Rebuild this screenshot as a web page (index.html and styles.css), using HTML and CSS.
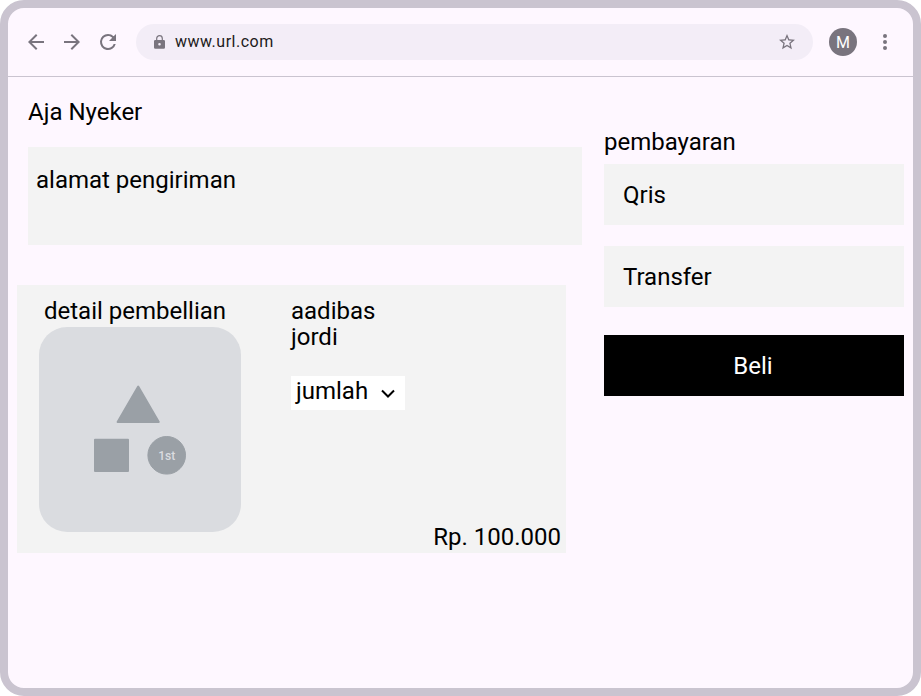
FILE: index.html
```html
<!DOCTYPE html>
<html lang="id">
<head>
<meta charset="utf-8">
<title>Aja Nyeker</title>
<link rel="stylesheet" href="styles.css">
</head>
<body>
<div class="browser">
  <header class="toolbar">
    <nav class="nav">
      <svg class="icon" viewBox="0 0 24 24"><path d="M20 11H7.83l5.59-5.59L12 4l-8 8 8 8 1.41-1.41L7.83 13H20z"/></svg>
      <svg class="icon" viewBox="0 0 24 24"><path d="M12 4l-1.41 1.41L16.17 11H4v2h12.17l-5.58 5.59L12 20l8-8z"/></svg>
      <svg class="icon" viewBox="0 0 24 24"><path d="M17.65 6.35A7.96 7.96 0 0 0 12 4a8 8 0 1 0 7.73 10h-2.08A6 6 0 1 1 12 6c1.66 0 3.14.69 4.22 1.78L13 11h7V4z"/></svg>
    </nav>
    <div class="address">
      <svg class="lock" viewBox="0 0 11 14"><path class="shackle" d="M2.700 6V3.500a2.800 2.800 0 0 1 5.600 0V6"/><path fill-rule="evenodd" d="M1.300 5h8.400A1.300 1.300 0 0 1 11 6.300v6.100a1.300 1.300 0 0 1-1.300 1.300H1.300A1.300 1.300 0 0 1 0 12.400V6.300A1.300 1.300 0 0 1 1.300 5zM5.500 8a1.300 1.300 0 1 0 0 2.600 1.300 1.300 0 0 0 0-2.600z"/></svg>
      <span class="url">www.url.com</span>
      <svg class="star" viewBox="2 2 20 19"><path d="M22 9.240l-7.190-.620L12 2 9.190 8.630 2 9.240l5.460 4.730L5.820 21 12 17.270 18.180 21l-1.630-7.030zM12 15.400l-3.760 2.270 1-4.280-3.320-2.880 4.380-.38L12 6.100l1.710 4.040 4.380.38-3.320 2.880 1 4.280z"/></svg>
    </div>
    <div class="avatar">M</div>
    <svg class="icon" viewBox="0 0 24 24"><circle cx="12" cy="6" r="2"/><circle cx="12" cy="12" r="2"/><circle cx="12" cy="18" r="2"/></svg>
  </header>
  <main class="page">
    <section class="details">
      <h1 class="title">Aja Nyeker</h1>
      <div class="shipping">alamat pengiriman</div>
      <article class="order">
        <div class="preview">
          <h2 class="caption">detail pembellian</h2>
          <div class="thumb">
            <svg class="shapes" viewBox="0 0 202 205">
              <path d="M99.200 59.500L119.800 94.900H78.600z"/>
              <path d="M56 112.700h33v31.300h-33z"/>
              <circle cx="127.700" cy="128.300" r="18.800"/>
              <text x="127.700" y="132.600">1st</text>
            </svg>
          </div>
        </div>
        <div class="product">
          <p class="name">aadibas<br>jordi</p>
          <div class="quantity">jumlah
            <svg class="chevron" viewBox="0 0 16 10"><path d="M2 1.500l6 6 6-6"/></svg>
          </div>
          <p class="price">Rp. 100.000</p>
        </div>
      </article>
    </section>
    <aside class="payment">
      <h2 class="caption">pembayaran</h2>
      <div class="method">Qris</div>
      <div class="method">Transfer</div>
      <button class="buy">Beli</button>
    </aside>
  </main>
</div>
</body>
</html>
```
FILE: styles.css
```css
* { box-sizing: border-box; }
body { margin: 0; background: #fff; font-family: Roboto, sans-serif; color: #000; }
h1, h2, p { margin: 0; font-weight: 400; font-size: inherit; }
.browser { width: 921px; height: 696px; border: 8px solid #cac4d0; border-radius: 24px; background: #fef7ff; overflow: hidden; }
.toolbar { display: flex; align-items: center; height: 69px; padding: 0 16px; border-bottom: 1px solid #cac4d0; }
.icon { width: 24px; height: 24px; fill: #79747e; flex: none; }
.nav { display: flex; gap: 12px; margin-right: 16px; }
.address { display: flex; align-items: center; width: 677px; height: 36px; padding: 0 18px; border-radius: 18px; background: #f3edf7; }
.lock { width: 11px; height: 14px; fill: #79747e; }
.shackle { fill: none; stroke: #79747e; stroke-width: 1.2; }
.url { margin-left: 10px; font-size: 16px; line-height: 24px; letter-spacing: 0.5px; color: #1d1b20; }
.star { width: 16px; height: 15.2px; margin-left: auto; fill: #79747e; }
.avatar { width: 28px; height: 28px; margin: 0 16px; border-radius: 50%; background: #79747e; color: #fff; font-size: 16px; line-height: 30px; text-align: center; }
.page { display: flex; justify-content: space-between; padding: 0 9px; font-size: 24px; line-height: 26px; }
.details { width: 565px; padding-top: 22px; }
.title { margin-left: 11px; }
.shipping { width: 554px; height: 98px; margin: 22px 0 40px 11px; padding: 20px 8px; background: #f3f3f3; }
.order { display: flex; width: 549px; height: 268px; padding: 13px 5px 3px 22px; background: #f3f3f3; }
.preview { width: 252px; }
.preview .caption { margin-left: 5px; }
.thumb { width: 202px; height: 205px; margin-top: 3px; border-radius: 28px; background: #dadce0; }
.shapes { display: block; width: 202px; height: 205px; fill: #9aa0a6; }
.shapes path { stroke: #9aa0a6; stroke-width: 2; stroke-linejoin: round; }
.shapes circle { stroke: #9aa0a6; }
.shapes text { fill: #dadce0; font-size: 12px; font-weight: 500; text-anchor: middle; }
.product { display: flex; flex: 1; flex-direction: column; }
.quantity { display: flex; width: 114px; height: 34px; margin-top: 26px; padding: 2px 9px 0 5px; justify-content: space-between; background: #fff; }
.chevron { width: 16px; height: 10px; margin-top: 11px; fill: none; stroke: #000; stroke-width: 2; }
.price { margin-top: auto; text-align: right; }
.payment { width: 300px; padding-top: 52px; }
.method { height: 61px; margin-top: 9px; padding: 18px 19px; background: #f3f3f3; }
.method + .method { margin-top: 21px; }
.buy { display: block; width: 300px; height: 61px; margin-top: 28px; padding: 0 2px 0 0; border: 0; background: #000; color: #fff; font: 24px/26px Roboto, sans-serif; }
```
